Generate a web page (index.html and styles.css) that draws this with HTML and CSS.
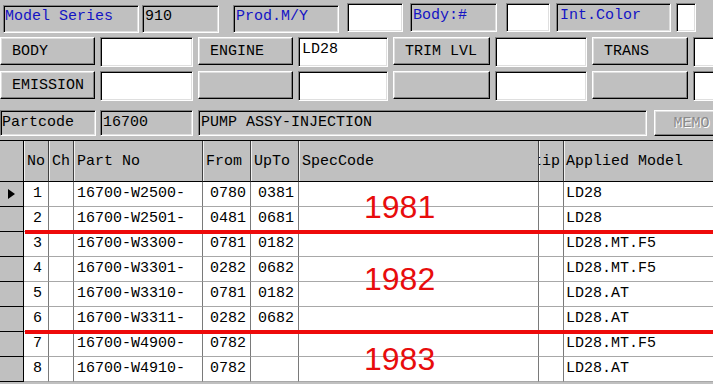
FILE: index.html
```html
<!DOCTYPE html>
<html>
<head>
<meta charset="utf-8">
<link rel="stylesheet" href="styles.css">
</head>
<body>
<div class="screen">
  <div class="row1">
    <div class="lbl sunken blue f-model">Model Series</div>
    <div class="lbl sunken f-series">910</div>
    <div class="lbl sunken blue f-prod">Prod.M/Y</div>
    <div class="box sunken f-prodv"></div>
    <div class="lbl lbl-hi sunken blue f-body">Body:#</div>
    <div class="box sunken f-bodyv"></div>
    <div class="lbl lbl-hi sunken blue f-int">Int.Color</div>
    <div class="box sunken f-intv"></div>
  </div>

  <div class="ctlrow">
    <div class="btn raised">BODY</div>
    <div class="inp sunken"></div>
    <div class="btn raised">ENGINE</div>
    <div class="inp sunken">LD28</div>
    <div class="btn raised">TRIM LVL</div>
    <div class="inp sunken"></div>
    <div class="btn raised">TRANS</div>
    <div class="inp sunken"></div>
  </div>

  <div class="ctlrow row3">
    <div class="btn raised">EMISSION</div>
    <div class="inp sunken"></div>
    <div class="btn raised"></div>
    <div class="inp sunken"></div>
    <div class="btn raised"></div>
    <div class="inp sunken"></div>
    <div class="btn raised"></div>
    <div class="inp sunken"></div>
  </div>

  <div class="partrow">
    <div class="pbox sunken p-code">Partcode</div>
    <div class="pbox sunken p-num">16700</div>
    <div class="pbox sunken p-name">PUMP ASSY-INJECTION</div>
    <div class="memo raised">MEMO</div>
  </div>

  <div class="grid">
    <div class="grow ghead">
      <div class="c ind"></div>
      <div class="c">No</div>
      <div class="c">Ch</div>
      <div class="c">Part No</div>
      <div class="c">From</div>
      <div class="c">UpTo</div>
      <div class="c">SpecCode</div>
      <div class="c clip"><span class="cliptext">tip</span></div>
      <div class="c am">Applied Model</div>
    </div>

    <div class="grow">
      <div class="c ind"><span class="arrow"></span></div>
      <div class="c no">1</div><div class="c"></div>
      <div class="c pn">16700-W2500-</div>
      <div class="c num">0780</div><div class="c num">0381</div>
      <div class="c"></div><div class="c"></div>
      <div class="c am">LD28</div>
    </div>
    <div class="grow">
      <div class="c ind"></div>
      <div class="c no">2</div><div class="c"></div>
      <div class="c pn">16700-W2501-</div>
      <div class="c num">0481</div><div class="c num">0681</div>
      <div class="c"></div><div class="c"></div>
      <div class="c am">LD28</div>
    </div>
    <div class="grow">
      <div class="c ind"></div>
      <div class="c no">3</div><div class="c"></div>
      <div class="c pn">16700-W3300-</div>
      <div class="c num">0781</div><div class="c num">0182</div>
      <div class="c"></div><div class="c"></div>
      <div class="c am">LD28.MT.F5</div>
    </div>
    <div class="grow">
      <div class="c ind"></div>
      <div class="c no">4</div><div class="c"></div>
      <div class="c pn">16700-W3301-</div>
      <div class="c num">0282</div><div class="c num">0682</div>
      <div class="c"></div><div class="c"></div>
      <div class="c am">LD28.MT.F5</div>
    </div>
    <div class="grow">
      <div class="c ind"></div>
      <div class="c no">5</div><div class="c"></div>
      <div class="c pn">16700-W3310-</div>
      <div class="c num">0781</div><div class="c num">0182</div>
      <div class="c"></div><div class="c"></div>
      <div class="c am">LD28.AT</div>
    </div>
    <div class="grow">
      <div class="c ind"></div>
      <div class="c no">6</div><div class="c"></div>
      <div class="c pn">16700-W3311-</div>
      <div class="c num">0282</div><div class="c num">0682</div>
      <div class="c"></div><div class="c"></div>
      <div class="c am">LD28.AT</div>
    </div>
    <div class="grow">
      <div class="c ind"></div>
      <div class="c no">7</div><div class="c"></div>
      <div class="c pn">16700-W4900-</div>
      <div class="c num">0782</div><div class="c num"></div>
      <div class="c"></div><div class="c"></div>
      <div class="c am">LD28.MT.F5</div>
    </div>
    <div class="grow">
      <div class="c ind"></div>
      <div class="c no">8</div><div class="c"></div>
      <div class="c pn">16700-W4910-</div>
      <div class="c num">0782</div><div class="c num"></div>
      <div class="c"></div><div class="c"></div>
      <div class="c am">LD28.AT</div>
    </div>

    <div class="redline rl1"></div>
    <div class="redline rl2"></div>
    <div class="year y1">1981</div>
    <div class="year y2">1982</div>
    <div class="year y3">1983</div>
  </div>
</div>
</body>
</html>
```

FILE: styles.css
```css
* { box-sizing: border-box; }

body {
  margin: 0;
  background: #c0c0c0;
  width: 713px;
  height: 384px;
  overflow: hidden;
  font-family: "Liberation Mono", "Courier New", monospace;
  font-size: 15px;
  line-height: 17px;
  color: #000;
}

.screen { width: 713px; }

.sunken {
  border: 1px solid;
  border-color: #808080 #fff #fff #808080;
  box-shadow: inset 1px 1px 0 #000, inset -1px -1px 0 #dfdfdf;
}

.raised {
  border: 1px solid;
  border-color: #fff #000 #000 #fff;
  box-shadow: inset -1px -1px 0 #808080, inset 1px 1px 0 #dfdfdf;
}

.blue { color: #1414c4; }

/* top row */
.row1 {
  display: flex;
  align-items: flex-start;
  height: 33px;
  padding: 3px 0 0 3px;
}
.row1 > div { flex: none; }
.lbl {
  background: #c0c0c0;
  height: 28px;
  margin-top: 2px;
  padding: 2px 1px 0;
  white-space: nowrap;
  overflow: hidden;
}
.lbl-hi { margin-top: 0; height: 29px; padding-top: 3px; }
.box { background: #fff; height: 29px; }

.f-model  { width: 136px; }
.f-series { width: 77px; margin-left: 3px; padding-left: 2px; }
.f-prod   { width: 106px; margin-left: 14px; padding-left: 2px; }
.f-prodv  { width: 56px; margin-left: 8px; }
.f-body   { width: 87px; margin-left: 7px; padding-left: 2px; }
.f-bodyv  { width: 44px; margin-left: 9px; }
.f-int    { width: 115px; margin-left: 6px; padding-left: 3px; }
.f-intv   { width: 20px; margin-left: 5px; }

/* control rows */
.ctlrow {
  display: grid;
  grid-template-columns: 95px 93px 95px 90px 97px 92px 96px 40px;
  column-gap: 5px;
  height: 30px;
  margin-top: 4px;
}
.row3 { margin-top: 4px; }

.btn {
  background: #c0c0c0;
  height: 28px;
  display: flex;
  align-items: center;
  padding-left: 11px;
  white-space: nowrap;
}
.inp {
  background: #fff;
  height: 30px;
  padding: 3px 2px 0 3px;
  white-space: nowrap;
}

/* part code row */
.partrow {
  display: flex;
  height: 26px;
  margin-top: 9px;
}
.partrow > div { flex: none; }
.pbox {
  background: #c0c0c0;
  height: 26px;
  padding: 3px 2px 0 2px;
  white-space: nowrap;
}
.p-code { width: 96px; padding-left: 1px; }
.p-num  { width: 93px; margin-left: 4px; }
.p-name { width: 449px; margin-left: 5px; }
.memo {
  width: 75px;
  height: 26px;
  margin-left: 7px;
  background: #c0c0c0;
  color: #8a8a8a;
  text-shadow: 1px 1px 0 #fff;
  display: flex;
  align-items: center;
  justify-content: center;
}

/* grid */
.grid {
  position: relative;
  margin-top: 4px;
  background: #fff;
  width: 713px;
}
.grow {
  display: grid;
  grid-template-columns: 24px 25px 25px 129px 48px 48px 240px 25px 149px;
  height: 25px;
}
.c {
  border-right: 1px solid #7a7a7a;
  border-bottom: 1px solid #a8a8a8;
  display: flex;
  align-items: center;
  padding-bottom: 2px;
  white-space: nowrap;
  overflow: hidden;
}
.c:last-child { border-right: none; }

.ghead {
  height: 42px;
  background: #c0c0c0;
  border-top: 1px solid #000;
}
.ghead .c {
  border-right: 1px solid #404040;
  border-bottom: 1px solid #000;
  padding: 0 0 0 3px;
  box-shadow: inset 1px 0 0 #f0f0f0;
}
.ghead .c.ind { box-shadow: none; border-right-color: #000; }
.ghead .c.am { padding-left: 2px; border-right: none; }
.ghead .clip { padding-left: 0; }
.cliptext { margin-left: -6px; }

.ind {
  background: #c0c0c0;
  border-right: 1px solid #000;
  border-bottom: 1px solid #000;
  padding-left: 8px;
}
.arrow {
  width: 0;
  height: 0;
  border-left: 7px solid #000;
  border-top: 5px solid transparent;
  border-bottom: 5px solid transparent;
  margin-top: 2px;
}
.no { justify-content: flex-end; padding-right: 6px; }
.pn { padding-left: 3px; }
.num { justify-content: flex-end; padding-right: 4px; }
.am { padding-left: 2px; }

.redline {
  position: absolute;
  left: 25px;
  right: 0;
  height: 4px;
  background: #ee0a0a;
}
.rl1 { top: 90px; }
.rl2 { top: 190px; }

.year {
  position: absolute;
  left: 364px;
  font-family: "Liberation Sans", Arial, sans-serif;
  font-size: 32px;
  line-height: 32px;
  color: #e80c0c;
}
.y1 { top: 51px; }
.y2 { top: 123px; }
.y3 { top: 203px; }
```
